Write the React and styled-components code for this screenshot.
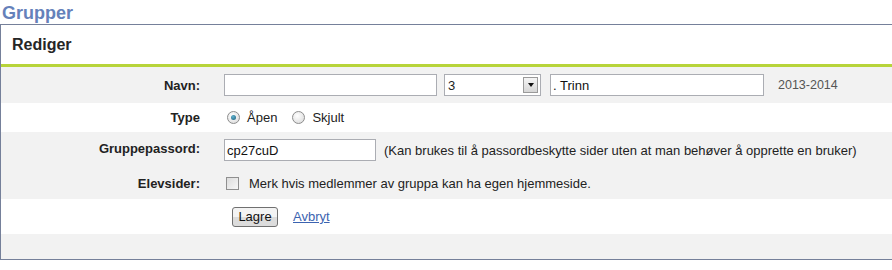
import React from "react";
import styled, { createGlobalStyle } from "styled-components";

const GlobalStyle = createGlobalStyle`
  html, body {
    margin: 0;
    padding: 0;
    background: #ffffff;
    overflow: hidden;
  }
  body {
    font-family: "Liberation Sans", Arial, sans-serif;
    font-size: 13px;
    color: #222;
  }
`;

const Page = styled.div`
  width: 892px;
  height: 270px;
  overflow: hidden;
`;

const Title = styled.h1`
  margin: 0;
  padding: 3px 0 0 2px;
  height: 21px;
  font-size: 18px;
  line-height: 20px;
  font-weight: bold;
  color: #6581ba;
`;

const Panel = styled.div`
  width: 920px;
  border: 1px solid #75809a;
`;

const PanelHeader = styled.div`
  height: 39px;
  display: flex;
  align-items: center;
  padding-left: 11px;
  font-size: 16px;
  font-weight: bold;
  color: #262626;
  border-bottom: 3px solid #b7d43a;
`;

const Row = styled.div`
  display: flex;
  align-items: ${(p) => (p.$top ? "flex-start" : "center")};
  height: ${(p) => p.$h}px;
  box-sizing: border-box;
  padding-top: ${(p) => p.$pt || 0}px;
  background: ${(p) => (p.$grey ? "#f2f2f2" : "#ffffff")};
`;

const Label = styled.div`
  width: 199px;
  flex: none;
  text-align: right;
  font-weight: bold;
  font-size: 13px;
  color: #222;
  padding-right: 24px;
  padding-top: ${(p) => p.$pt || 0}px;
`;

const Field = styled.div`
  display: flex;
  align-items: center;
`;

const TextInput = styled.div`
  width: ${(p) => p.$w}px;
  height: 22px;
  box-sizing: border-box;
  border: 1px solid #abadb3;
  background: #fff;
  margin-right: ${(p) => p.$mr || 0}px;
  padding: 0 2px;
  display: flex;
  align-items: center;
  font-size: 13px;
  color: #111;
`;

const Select = styled.div`
  width: 97px;
  height: 22px;
  box-sizing: border-box;
  border: 1px solid #abadb3;
  background: #fff;
  margin-right: 9px;
  display: flex;
  align-items: center;
  justify-content: space-between;
  padding-left: 3px;
  font-size: 13px;
`;

const SelectButton = styled.div`
  width: 15px;
  height: 16px;
  margin-right: 2px;
  box-sizing: border-box;
  border: 1px solid #9a9a9a;
  background: linear-gradient(#f5f5f5, #d6d6d6);
  display: flex;
  align-items: center;
  justify-content: center;
  &::after {
    content: "";
    border-left: 3.5px solid transparent;
    border-right: 3.5px solid transparent;
    border-top: 4px solid #111;
  }
`;

const Muted = styled.span`
  color: #555;
  font-size: 12.5px;
  margin-left: 5px;
`;

const Radio = styled.span`
  width: 11px;
  height: 11px;
  border-radius: 50%;
  border: 1px solid #8d8d8d;
  background: radial-gradient(circle at 40% 35%, #ffffff, #d7d7d7);
  display: inline-flex;
  align-items: center;
  justify-content: center;
  margin: 0 7px 0 ${(p) => p.$ml}px;
  &::after {
    content: "";
    display: ${(p) => (p.$on ? "block" : "none")};
    width: 5px;
    height: 5px;
    border-radius: 50%;
    background: radial-gradient(circle at 40% 35%, #5fb2cf, #1c5c78);
  }
`;

const Option = styled.span`
  font-size: 13px;
  color: #222;
`;

const Checkbox = styled.span`
  width: 11px;
  height: 11px;
  border: 1px solid #8f8f8f;
  background: linear-gradient(135deg, #dcdcdc, #f7f7f7);
  margin: 0 10px 0 2px;
  display: inline-block;
`;

const Hint = styled.span`
  font-size: 13px;
  color: #222;
  margin-left: 8px;
`;

const Text = styled.span`
  font-size: 13px;
  color: #222;
`;

const Button = styled.button`
  margin-left: 8px;
  height: 20px;
  width: 46px;
  padding: 0;
  border: 1px solid #707070;
  border-radius: 3px;
  background: linear-gradient(#f3f3f3 50%, #dcdcdc 50%);
  font-family: "Liberation Sans", Arial, sans-serif;
  font-size: 13px;
  color: #111;
`;

const Link = styled.a`
  margin-left: 15px;
  color: #3c63b0;
  text-decoration: underline;
  font-size: 13px;
`;

export default function App() {
  return (
    <Page>
      <GlobalStyle />
      <Title>Grupper</Title>
      <Panel>
        <PanelHeader>Rediger</PanelHeader>
        <Row $h={36} $grey>
          <Label>Navn:</Label>
          <Field>
            <TextInput $w={213} $mr={7} />
            <Select>
              3
              <SelectButton />
            </Select>
            <TextInput $w={214} $mr={9}>. Trinn</TextInput>
            <Muted>2013-2014</Muted>
          </Field>
        </Row>
        <Row $h={29}>
          <Label>Type</Label>
          <Field>
            <Radio $on $ml={3} />
            <Option>Åpen</Option>
            <Radio $ml={15} />
            <Option>Skjult</Option>
          </Field>
        </Row>
        <Row $h={36} $grey $top $pt={7}>
          <Label $pt={2}>Gruppepassord:</Label>
          <Field>
            <TextInput $w={152}>cp27cuD</TextInput>
            <Hint>(Kan brukes til å passordbeskytte sider uten at man behøver å opprette en bruker)</Hint>
          </Field>
        </Row>
        <Row $h={31} $grey>
          <Label>Elevsider:</Label>
          <Field>
            <Checkbox />
            <Text>Merk hvis medlemmer av gruppa kan ha egen hjemmeside.</Text>
          </Field>
        </Row>
        <Row $h={35}>
          <Label />
          <Field>
            <Button>Lagre</Button>
            <Link href="#">Avbryt</Link>
          </Field>
        </Row>
        <Row $h={25} $grey />
      </Panel>
    </Page>
  );
}
